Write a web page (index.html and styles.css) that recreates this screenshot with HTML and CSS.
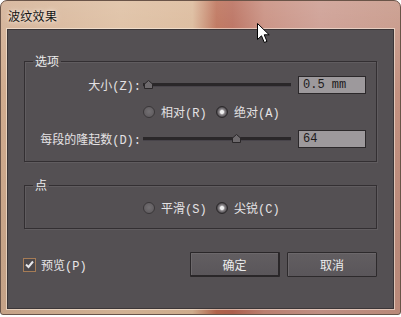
FILE: index.html
```html
<!DOCTYPE html>
<html lang="zh-CN">
<head>
<meta charset="utf-8">
<title>波纹效果</title>
<link rel="stylesheet" href="styles.css">
</head>
<body>
<div class="window">
  <div class="titlebar"><span class="title">波纹效果</span></div>
  <div class="client">
    <fieldset class="group g1">
      <legend>选项</legend>
      <div class="row">
        <span class="lbl">大小(Z):</span>
        <div class="slider">
          <div class="track"></div>
          <svg class="thumb" style="left:1px" width="9" height="9" viewBox="0 0 9 9"><polygon points="0.5,8.5 0.5,4 4.5,0.5 8.5,4 8.5,8.5"/></svg>
        </div>
        <div class="field">0.5 mm</div>
      </div>
      <div class="row radios">
        <span class="opt first"><span class="radio"></span>相对(R)</span>
        <span class="opt"><span class="radio on"></span>绝对(A)</span>
      </div>
      <div class="row">
        <span class="lbl">每段的隆起数(D):</span>
        <div class="slider">
          <div class="track"></div>
          <svg class="thumb" style="left:89px" width="9" height="9" viewBox="0 0 9 9"><polygon points="0.5,8.5 0.5,4 4.5,0.5 8.5,4 8.5,8.5"/></svg>
        </div>
        <div class="field">64</div>
      </div>
    </fieldset>
    <fieldset class="group g2">
      <legend>点</legend>
      <div class="row radios">
        <span class="opt first"><span class="radio"></span>平滑(S)</span>
        <span class="opt"><span class="radio on"></span>尖锐(C)</span>
      </div>
    </fieldset>
    <div class="footer">
      <label class="check">
        <span class="box"><svg width="11" height="11" viewBox="0 0 11 11"><path d="M2 5.5 L4.5 8 L9 2.5" fill="none" stroke="#e8e8ec" stroke-width="2"/></svg></span>
        预览(P)
      </label>
      <div class="buttons">
        <button class="btn default">确定</button>
        <button class="btn">取消</button>
      </div>
    </div>
  </div>
  <svg class="cursor" width="14" height="21" viewBox="0 0 14 21"><path d="M0.5,0.5 L0.5,16.5 L4.5,12.8 L7.3,19.5 L10,18.4 L7.2,11.8 L12.2,11.8 Z" fill="#ffffff" stroke="#000000" stroke-width="1"/></svg>
</div>
</body>
</html>
```
FILE: styles.css
```css
* { box-sizing: border-box; }
html, body { margin: 0; padding: 0; background: #ffffff; }
body {
  font-family: "Liberation Mono", "Noto Sans CJK SC", monospace;
  font-size: 12px;
  color: #e4e2e4;
}
.window {
  position: relative;
  width: 401px;
  height: 315px;
  border: 1px solid #6a5448;
  border-radius: 7px 7px 3px 3px;
  padding: 0 6px 5px 6px;
  background:
    linear-gradient(180deg, rgba(255,255,255,0.18), rgba(255,255,255,0) 30%, rgba(0,0,0,0.05) 80%),
    linear-gradient(90deg, #d0ab8e 0%, #dcbb9c 30%, #d9b594 48%, #b8684e 54%, #b46451 58%, #c48676 66%, #c9968a 80%, #c3907f 100%);
  display: flex;
  flex-direction: column;
}
.titlebar {
  height: 28px;
  display: flex;
  align-items: center;
  padding-left: 1px;
}
.title {
  font-family: "Noto Sans CJK SC", sans-serif;
  font-size: 12px;
  letter-spacing: 0.3px;
  color: #151515;
  text-shadow: 0 0 6px rgba(255,245,235,0.9), 0 0 3px rgba(255,245,235,0.8);
  margin-top: 1px;
}
.client {
  flex: 1;
  background: #545053;
  border: 1px solid #3b3638;
  box-shadow: 0 0 0 1px rgba(255,244,232,0.55);
  padding: 0 0 0 16px;
  display: flex;
  flex-direction: column;
}
.group {
  width: 353px;
  margin: 0;
  padding: 0;
  border: 1px solid #332f32;
  box-shadow: inset 1px 1px 0 #605c5f, 1px 1px 0 #605c5f;
  min-inline-size: 0;
}
.group legend {
  font-family: "Noto Sans CJK SC", sans-serif;
  line-height: 14px;
  height: 14px;
  padding: 0 2px;
  margin-left: 8px;
  color: #ececec;
}
.g1 { margin-top: 24px; padding: 8px 0 13px 0; display: flex; flex-direction: column; gap: 9px; }
.g2 { margin-top: 16px; padding: 7px 0 11px 0; }
.row {
  height: 18px;
  display: flex;
  align-items: center;
}
.lbl {
  width: 116px;
  text-align: right;
  white-space: nowrap;
}
.slider {
  position: relative;
  width: 148px;
  height: 18px;
  margin-left: 2px;
  display: flex;
  align-items: center;
}
.track {
  width: 100%;
  height: 4px;
  background: #2a2729;
  border-bottom: 1px solid #48444a;
}
.thumb {
  position: absolute;
  top: 4px;
}
.thumb polygon { fill: #6e6a6d; stroke: #2a2729; stroke-width: 1; }
.field {
  width: 68px;
  height: 18px;
  margin-left: 7px;
  border: 1px solid #2b282a;
  background: #9d999c;
  color: #1c1a1b;
  padding-left: 4px;
  line-height: 16px;
  white-space: nowrap;
}
.radios { padding-left: 118px; }
.opt {
  display: flex;
  align-items: center;
  gap: 6px;
  white-space: nowrap;
}
.opt.first { width: 73px; }
.radio {
  width: 12px;
  height: 12px;
  border-radius: 50%;
  border: 1px solid #3a3739;
  background: radial-gradient(circle at 50% 45%, #737073 0, #646063 60%, #58545a 100%);
  flex: none;
}
.radio.on {
  border-color: #2c292b;
  background: radial-gradient(circle, #f4f4f4 0, #eaeaea 1.6px, #8c888b 2.8px, #6a666a 4px, #4a474a 5px);
}
.footer {
  width: 353px;
  margin-top: 23px;
  display: flex;
  align-items: center;
  justify-content: space-between;
}
.check {
  display: flex;
  align-items: center;
  gap: 5px;
  margin-left: -1px;
  color: #e8e6e8;
  font-family: "Liberation Mono", "Noto Sans CJK SC", monospace;
}
.box {
  width: 13px;
  height: 14px;
  border: 1px solid #a67c56;
  background: #4c484b;
  display: flex;
  align-items: center;
  justify-content: center;
}
.buttons { display: flex; gap: 7px; }
.btn {
  width: 90px;
  height: 25px;
  font-family: "Noto Sans CJK SC", sans-serif;
  font-size: 12px;
  color: #ececec;
  background: linear-gradient(180deg, #625e61, #5a565a);
  border: 1px solid #2d2a2c;
  border-radius: 1px;
  padding: 0;
  box-shadow: inset 1px 1px 0 #6c686b;
}
.btn.default { border: 2px solid #2a2729; border-top-width: 1px; border-left-width: 1px; }
.cursor {
  position: absolute;
  left: 256px;
  top: 22px;
}
```
